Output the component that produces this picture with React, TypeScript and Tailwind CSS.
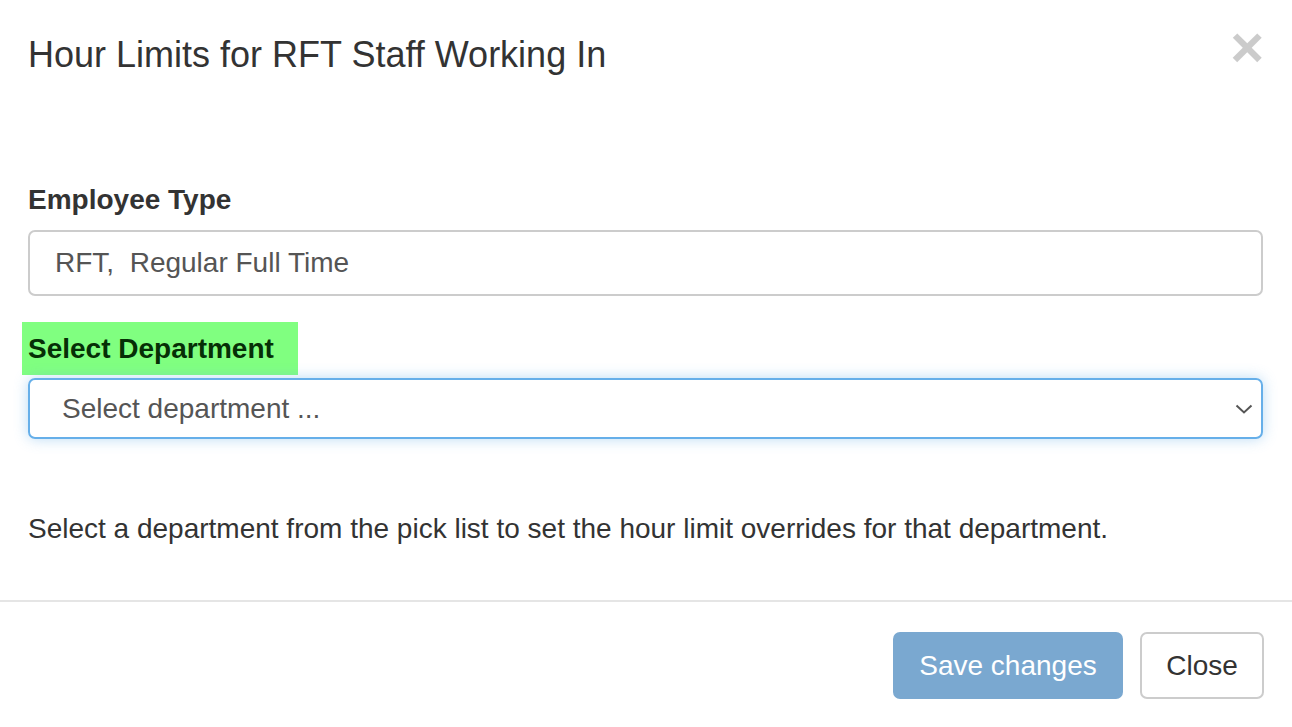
import React from "react";

export default function App() {
  return (
    <div
      className="w-[1292px] h-[727px] bg-white text-[#333] overflow-hidden flex flex-col"
      style={{ fontFamily: '"Liberation Sans", Arial, sans-serif' }}
    >
      {/* header */}
      <div className="flex items-start justify-between pl-[28px] pr-[28px] pt-[32px] h-[120px]">
        <h4 className="text-[36px] leading-[45px] font-normal">
          Hour Limits for RFT Staff Working In
        </h4>
        <span className="text-[58px] leading-[40px] font-bold text-black opacity-20 mt-[-5px] mr-[0px]">
          ×
        </span>
      </div>

      {/* body */}
      <div className="px-[28px] pt-[60px] flex-1">
        <label className="block text-[28px] leading-[40px] font-bold mb-[10px]">
          Employee Type
        </label>
        <div className="h-[66px] w-[1235px] border-[2px] border-[#ccc] rounded-[7px] flex items-center pl-[25px] text-[28px] text-[#555]">
          RFT,&nbsp; Regular Full Time
        </div>

        <div className="mt-[26px] ml-[-6px] w-[276px] h-[53px] bg-[#80ff80] flex items-center pl-[6px] mb-[3px]">
          <span className="text-[28px] font-bold text-[#062f06]">
            Select Department
          </span>
        </div>
        <div className="h-[61px] w-[1235px] border-[2px] border-[#66afe9] rounded-[7px] flex items-center justify-between pl-[32px] pr-[8px] text-[28px] text-[#555] shadow-[0_0_14px_rgba(102,175,233,0.45)]">
          <span>Select department ...</span>
          <svg width="18" height="12" viewBox="0 0 18 12" fill="none">
            <path d="M1.5 2.5 L9 9.5 L16.5 2.5" stroke="#555" strokeWidth="2" />
          </svg>
        </div>

        <p className="mt-[70px] text-[28px] leading-[40px]">
          Select a department from the pick list to set the hour limit overrides for that department.
        </p>
      </div>

      {/* footer */}
      <div className="border-t-[2px] border-[#e5e5e5] h-[127px] flex justify-end items-start gap-[17px] pt-[30px] pr-[28px]">
        <button className="h-[67px] w-[230px] rounded-[7px] bg-[#7aa8d0] text-white text-[28px]">
          Save changes
        </button>
        <button className="h-[67px] w-[124px] rounded-[7px] bg-white border-[2px] border-[#ccc] text-[#333] text-[28px]">
          Close
        </button>
      </div>
    </div>
  );
}
